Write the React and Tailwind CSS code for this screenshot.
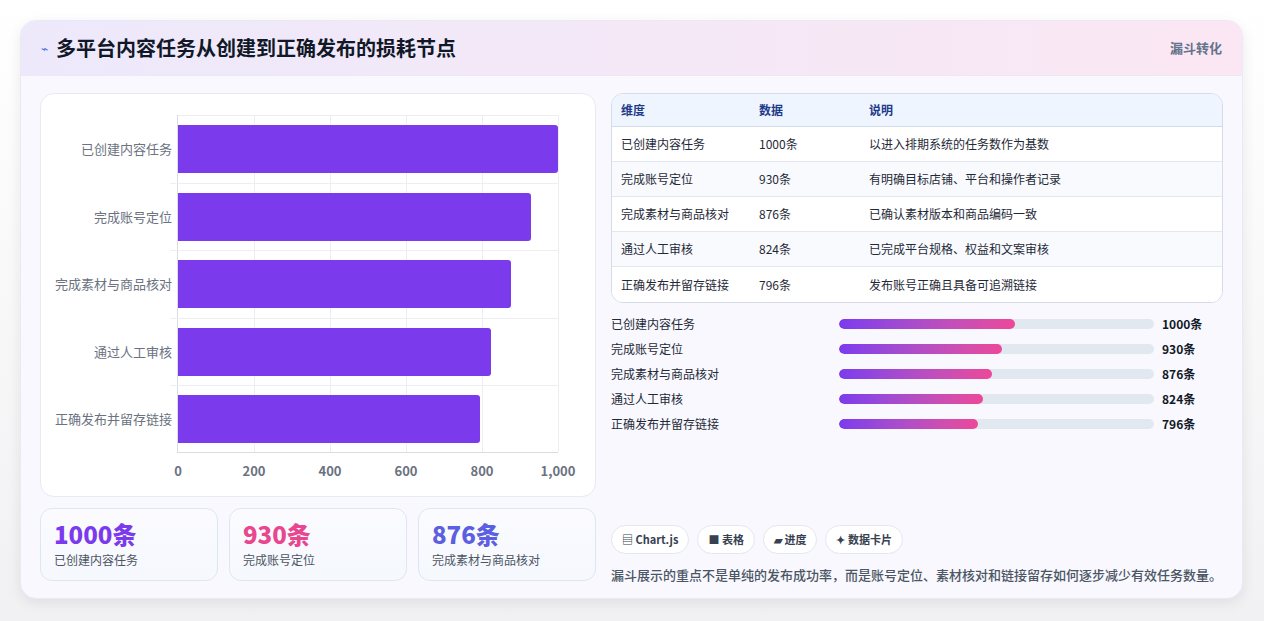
import React from "react";

const rows = [
  { n: "已创建内容任务", v: 1000, d: "以进入排期系统的任务数作为基数", p: 176 },
  { n: "完成账号定位", v: 930, d: "有明确目标店铺、平台和操作者记录", p: 163 },
  { n: "完成素材与商品核对", v: 876, d: "已确认素材版本和商品编码一致", p: 153 },
  { n: "通过人工审核", v: 824, d: "已完成平台规格、权益和文案审核", p: 144 },
  { n: "正确发布并留存链接", v: 796, d: "发布账号正确且具备可追溯链接", p: 139 },
];
const font = { fontFamily: '"Noto Sans CJK SC", "Noto Sans", sans-serif' };

export default function App() {
  return (
    <div className="w-[1264px] h-[621px] bg-gradient-to-b from-white to-[#f1f1f3] pt-[20px] pl-[20px]" style={font}>
      <div className="w-[1223px] h-[579px] rounded-[16px] bg-[#f8f8fe] shadow-[0_4px_14px_rgba(0,0,0,0.08)] border border-[#ebe8f8] overflow-hidden">
        <div className="h-[55px] flex items-center justify-between px-[20px] bg-gradient-to-r from-[#ede9fb] to-[#fbe7f3] border-b border-[#ece8f6]">
          <div className="flex items-center gap-[8px]">
            <span className="text-[#4f6fe0] text-[12px]">⌁</span>
            <span className="text-[20px] font-bold text-[#111827]">多平台内容任务从创建到正确发布的损耗节点</span>
          </div>
          <span className="text-[13px] font-bold text-[#64748b]">漏斗转化</span>
        </div>
        <div className="flex px-[19px] pt-[17px] gap-[15px]">
          <div className="w-[556px] flex flex-col gap-[11px]">
            <div className="h-[404px] bg-white rounded-[14px] border border-[#e8eaf3] pt-[21px] relative">
              <div className="flex">
                <div className="w-[136px] flex flex-col">
                  {rows.map((r) => (
                    <div key={r.n} className="h-[67.6px] flex items-center justify-end pr-[5px] text-[13px] text-[#6b7280]">{r.n}</div>
                  ))}
                </div>
                <div className="relative w-[381px] h-[338px] border-l border-b border-[#d9dce3]">
                  {[1, 2, 3, 4, 5].map((i) => (
                    <div key={i} className="absolute top-0 bottom-0 w-px bg-[#eceef2]" style={{ left: i * 76 }} />
                  ))}
                  <div className="absolute left-0 right-0 top-0 h-px bg-[#eceef2]" />
                  {rows.map((r, i) => (
                    <div key={r.n}>
                      {i > 0 && <div className="absolute left-[-8px] right-0 h-px bg-[#eceef2]" style={{ top: i * 67.6 }} />}
                      <div className="absolute left-0 h-[48px] bg-[#7c3aed] rounded-r-[3px]" style={{ top: i * 67.6 + 10, width: r.v * 0.38 }} />
                    </div>
                  ))}
                  {[0, 200, 400, 600, 800, "1,000"].map((t, i) => (
                    <div key={i} className="absolute top-[346px] text-[13px] font-semibold text-[#6b7280] -translate-x-1/2" style={{ left: i * 76 }}>{t}</div>
                  ))}
                </div>
              </div>
            </div>
            <div className="flex gap-[11px]">
              {[
                ["1000条", "已创建内容任务", "text-[#7c3aed]"],
                ["930条", "完成账号定位", "text-[#e8468f]"],
                ["876条", "完成素材与商品核对", "text-[#5b5fe0]"],
              ].map(([a, b, c]) => (
                <div key={b} className="w-[178px] h-[73px] rounded-[12px] border border-[#dde6f3] bg-gradient-to-b from-[#fbfbff] to-[#f5f8fd] px-[13px] pt-[9px]">
                  <div className={`text-[24px] font-extrabold leading-[32px] ${c}`}>{a}</div>
                  <div className="text-[12px] text-[#4b5563] mt-[1px]">{b}</div>
                </div>
              ))}
            </div>
          </div>
          <div className="w-[615px] flex flex-col">
            <div className="rounded-[12px] border border-[#d6dbe8] overflow-hidden bg-white text-[12px]">
              <div className="flex h-[33px] items-center bg-[#eef5fe] border-b border-[#d6dbe8] font-bold text-[#1e3a8a]">
                <div className="w-[147px] pl-[9px]">维度</div><div className="w-[110px]">数据</div><div>说明</div>
              </div>
              {rows.map((r, i) => (
                <div key={r.n} className={`flex h-[35px] items-center text-[#1f2937] ${i < 4 ? "border-b border-[#e3e7ef]" : ""} ${i % 2 ? "bg-[#f8fafd]" : "bg-white"}`}>
                  <div className="w-[147px] pl-[9px]">{r.n}</div><div className="w-[110px]">{r.v}条</div><div>{r.d}</div>
                </div>
              ))}
            </div>
            <div className="mt-[12px] flex flex-col gap-[7px]">
              {rows.map((r) => (
                <div key={r.n} className="flex items-center h-[18px] text-[12px]">
                  <div className="w-[228px] text-[#1f2937]">{r.n}</div>
                  <div className="w-[315px] h-[10px] rounded-full bg-[#e2e8f0] overflow-hidden">
                    <div className="h-full rounded-full bg-gradient-to-r from-[#7c3aed] to-[#ec4899]" style={{ width: r.p }} />
                  </div>
                  <div className="ml-[8px] font-bold text-[#111827]">{r.v}条</div>
                </div>
              ))}
            </div>
            <div className="mt-[92px] flex gap-[8px] text-[11px] font-bold text-[#374151]">
              {["▤ Chart.js", "■ 表格", "▰ 进度", "✦ 数据卡片"].map((t) => (
                <div key={t} className="h-[29px] px-[10px] flex items-center rounded-full border border-[#e3e7ef] bg-white">{t}</div>
              ))}
            </div>
            <div className="mt-[11px] text-[13px] text-[#4b5563] font-medium">漏斗展示的重点不是单纯的发布成功率，而是账号定位、素材核对和链接留存如何逐步减少有效任务数量。</div>
          </div>
        </div>
      </div>
    </div>
  );
}
